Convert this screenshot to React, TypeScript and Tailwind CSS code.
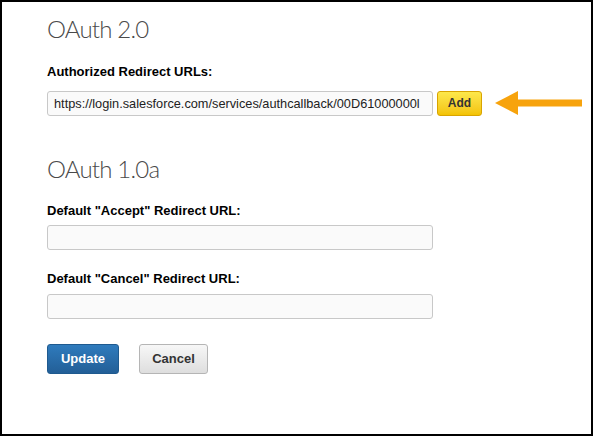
export default function App() {
  const label =
    "text-[13px] font-bold leading-[14px] text-black [font-family:'Liberation_Sans',Arial,sans-serif]";
  const input =
    "h-[25px] w-[386px] rounded-[3px] border border-[#c8c8c8] bg-[#fafafa] px-[6px] text-[12.75px] text-[#222] outline-none [font-family:'Liberation_Sans',Arial,sans-serif]";
  const heading =
    "text-[24px] font-light leading-[24px] tracking-[-0.8px] text-[#4a4a4a] [font-family:Lato,sans-serif]";

  return (
    <div className="h-[436px] w-[593px] overflow-hidden bg-black p-[2px]">
      <div className="h-full w-full bg-white pl-[45px] pt-[15px]">
        {/* OAuth 2.0 */}
        <h2 className={heading}>OAuth 2.0</h2>
        <p className={`${label} mt-[24px]`}>Authorized Redirect URLs:</p>
        <div className="mt-[11px] flex items-center">
          <input
            className={input}
            readOnly
            value="https://login.salesforce.com/services/authcallback/00D61000000l"
          />
          <button
            type="button"
            className="ml-[4px] h-[25px] w-[45px] rounded-[3px] border border-[#d9a400] bg-gradient-to-b from-[#fde84a] to-[#f3c300] text-[12px] font-bold text-[#333] [font-family:'Liberation_Sans',Arial,sans-serif]"
          >
            Add
          </button>
          <svg width="88" height="26" viewBox="0 0 88 26" className="ml-[13px]">
            <polygon points="0,13 23,1 23,25" fill="#f7a30d" />
            <rect x="21" y="9.5" width="66" height="7" fill="#f7a30d" />
          </svg>
        </div>

        {/* OAuth 1.0a */}
        <h2 className={`${heading} mt-[41px]`}>OAuth 1.0a</h2>
        <p className={`${label} mt-[23px]`}>Default "Accept" Redirect URL:</p>
        <input className={`${input} mt-[7px] block`} readOnly value="" />
        <p className={`${label} mt-[22px]`}>Default "Cancel" Redirect URL:</p>
        <input className={`${input} mt-[8px] block`} readOnly value="" />

        <div className="mt-[25px] flex gap-[20px]">
          <button
            type="button"
            className="h-[30px] w-[72px] rounded-[3px] border border-[#1f5a8f] bg-gradient-to-b from-[#2f7bbd] to-[#235f97] text-[13px] font-bold text-white [font-family:'Liberation_Sans',Arial,sans-serif]"
          >
            Update
          </button>
          <button
            type="button"
            className="h-[30px] w-[69px] rounded-[3px] border border-[#b5b5b5] bg-gradient-to-b from-[#f7f7f7] to-[#dedede] text-[13px] font-bold text-[#333] [font-family:'Liberation_Sans',Arial,sans-serif]"
          >
            Cancel
          </button>
        </div>
      </div>
    </div>
  );
}
